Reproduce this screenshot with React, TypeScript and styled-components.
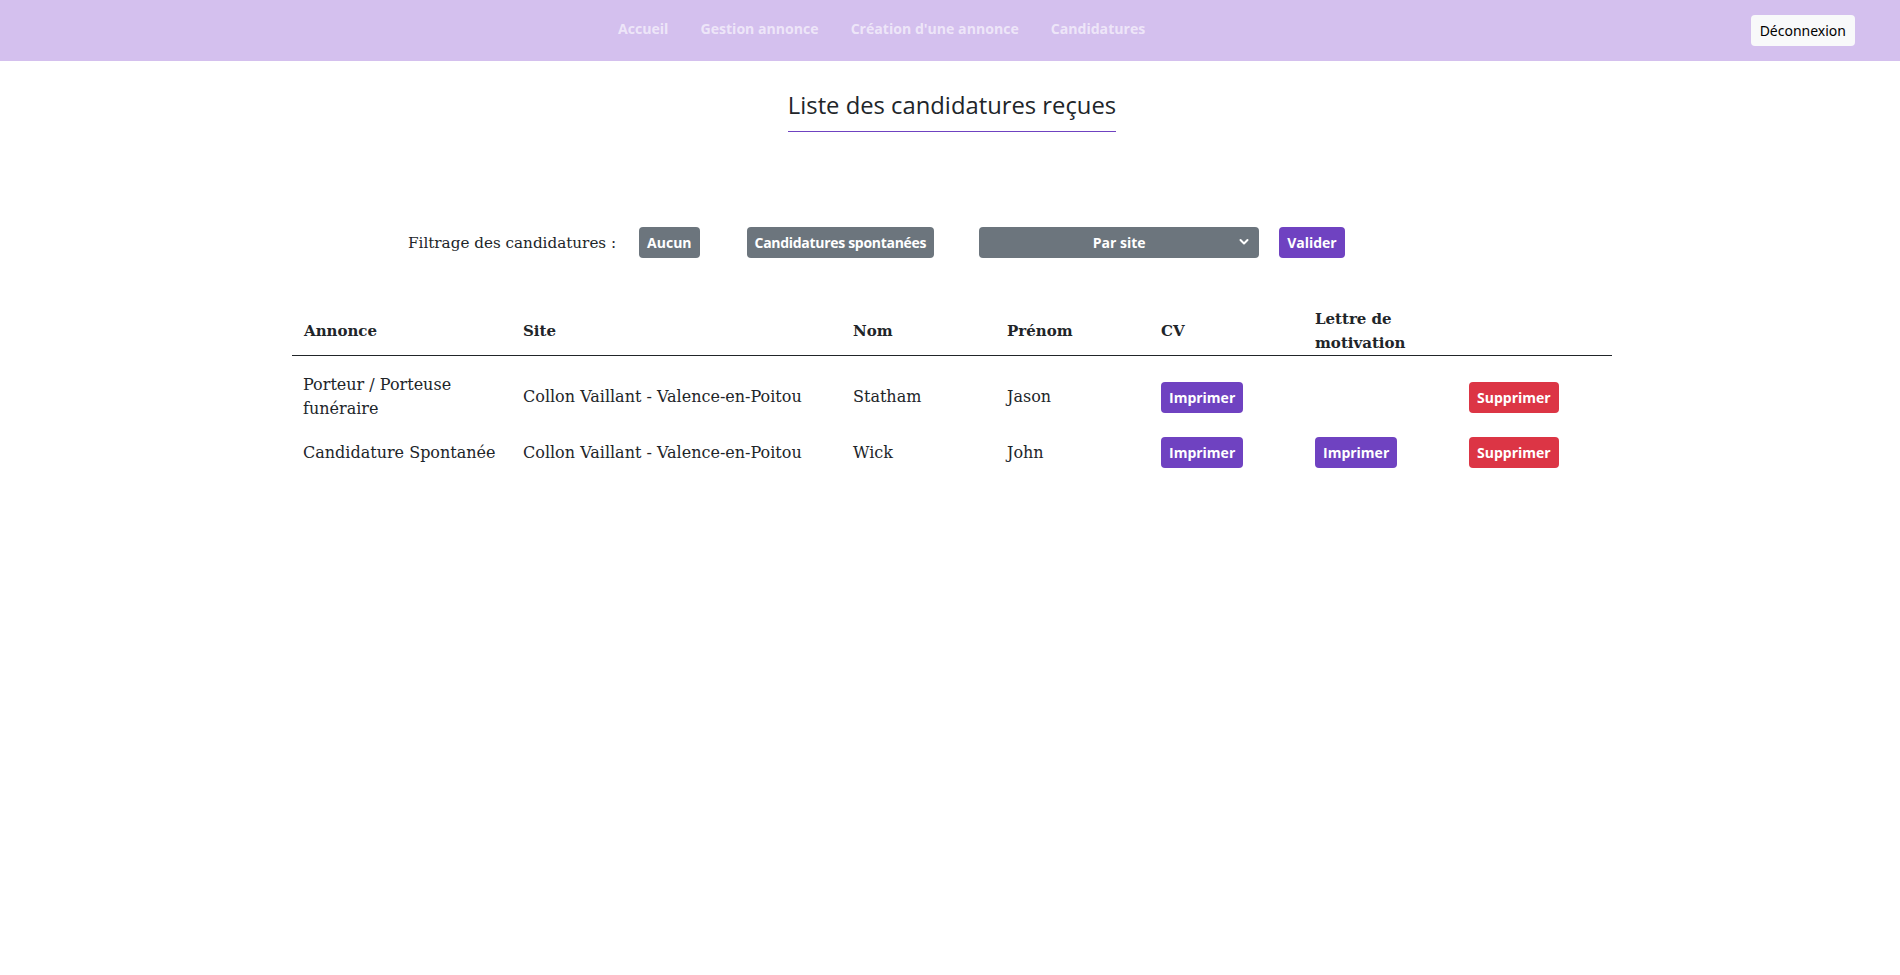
import React from "react";
import styled, { createGlobalStyle } from "styled-components";

const GlobalStyle = createGlobalStyle`
  body {
    margin: 0;
    background: #fff;
    color: #212529;
    font-family: "DejaVu Serif", serif;
  }
  * { box-sizing: border-box; }
`;

const NavBar = styled.nav`
  height: 61px;
  background: #d4c0ee;
  display: flex;
  align-items: center;
  padding: 0 45px 0 602px;
`;

const NavLinks = styled.div`
  display: flex;
  flex: 1;
  margin-bottom: 5px;
`;

const NavLink = styled.a`
  padding: 0 16px;
  font-family: "Open Sans", sans-serif;
  font-weight: 700;
  font-size: 14.1px;
  color: rgba(255, 255, 255, 0.62);
  text-decoration: none;
  cursor: pointer;
`;

const LogoutButton = styled.button`
  height: 31px;
  padding: 0 9px;
  border: none;
  border-radius: 4px;
  background: #f8f9fa;
  color: #000;
  font-family: "Noto Sans", sans-serif;
  font-size: 14px;
  cursor: pointer;
`;

const Main = styled.main`
  width: 1320px;
  margin-left: 292px;
  display: flex;
  flex-direction: column;
`;

const TitleWrap = styled.div`
  display: flex;
  justify-content: center;
  margin-top: 29px;
`;

const Title = styled.h2`
  margin: 0;
  padding-bottom: 10px;
  border-bottom: 1px solid #6f42c1;
  font-family: "Open Sans", sans-serif;
  font-weight: 400;
  font-size: 23.8px;
  line-height: 31px;
  color: #212529;
`;

const FilterRow = styled.div`
  display: flex;
  align-items: center;
  margin-top: 95px;
  padding-left: 116px;
  height: 31px;
`;

const FilterLabel = styled.span`
  font-size: 15.2px;
  margin-right: 23px;
`;

const Button = styled.button<{ variant: "gray" | "purple" | "red"; gap?: number }>`
  height: 31px;
  padding: 0 8px;
  border: none;
  border-radius: 4px;
  margin-right: ${(p) => p.gap ?? 0}px;
  background: ${(p) =>
    p.variant === "gray" ? "#6c757d" : p.variant === "purple" ? "#6f42c1" : "#dc3545"};
  color: #fff;
  font-family: "Open Sans", sans-serif;
  font-weight: 700;
  font-size: 14px;
  cursor: pointer;
`;

const SpontButton = styled(Button)`
  letter-spacing: -0.3px;
`;

const SelectWrap = styled.div`
  position: relative;
  width: 280px;
  height: 31px;
  margin-right: 20px;
`;

const Select = styled.select`
  width: 100%;
  height: 100%;
  appearance: none;
  border: none;
  border-radius: 4px;
  background: #6c757d;
  color: #fff;
  font-family: "Open Sans", sans-serif;
  font-weight: 700;
  font-size: 14px;
  text-align: center;
  text-align-last: center;
  padding: 0 24px;
`;

const Chevron = styled.svg`
  position: absolute;
  right: 10px;
  top: 11px;
  pointer-events: none;
`;

const Table = styled.table`
  margin-top: 41px;
  width: 1320px;
  border-collapse: collapse;
  table-layout: fixed;
`;

const Th = styled.th<{ w?: number }>`
  width: ${(p) => (p.w ? `${p.w}px` : "auto")};
  padding: 8px 8px 0;
  text-align: left;
  vertical-align: middle;
  font-size: 15px;
  font-weight: 700;
  line-height: 24px;
  border-bottom: 1px solid #212529;

  &:first-child {
    padding-left: 12px;
  }
`;

const Tr = styled.tr`
  &:first-child td {
    padding-top: 17px;
  }
`;

const Td = styled.td`
  padding: 8px;
  vertical-align: middle;
  font-size: 16px;
  line-height: 24px;

  &:first-child {
    padding-left: 11px;
  }
`;

const rows = [
  {
    annonce: "Porteur / Porteuse funéraire",
    site: "Collon Vaillant - Valence-en-Poitou",
    nom: "Statham",
    prenom: "Jason",
    lettre: false,
  },
  {
    annonce: "Candidature Spontanée",
    site: "Collon Vaillant - Valence-en-Poitou",
    nom: "Wick",
    prenom: "John",
    lettre: true,
  },
];

export default function App() {
  return (
    <>
      <GlobalStyle />
      <NavBar>
        <NavLinks>
          <NavLink>Accueil</NavLink>
          <NavLink>Gestion annonce</NavLink>
          <NavLink>Création d'une annonce</NavLink>
          <NavLink>Candidatures</NavLink>
        </NavLinks>
        <LogoutButton>Déconnexion</LogoutButton>
      </NavBar>
      <Main>
        <TitleWrap>
          <Title>Liste des candidatures reçues</Title>
        </TitleWrap>
        <FilterRow>
          <FilterLabel>Filtrage des candidatures :</FilterLabel>
          <Button variant="gray" gap={47}>Aucun</Button>
          <SpontButton variant="gray" gap={45}>Candidatures spontanées</SpontButton>
          <SelectWrap>
            <Select defaultValue="site">
              <option value="site">Par site</option>
            </Select>
            <Chevron width="10" height="8" viewBox="0 0 10 8">
              <path d="M1.5 2 L5 5.5 L8.5 2" fill="none" stroke="#fff" strokeWidth="2" strokeLinecap="round" strokeLinejoin="round" />
            </Chevron>
          </SelectWrap>
          <Button variant="purple">Valider</Button>
        </FilterRow>
        <Table>
          <thead>
            <tr>
              <Th w={223}>Annonce</Th>
              <Th w={330}>Site</Th>
              <Th w={154}>Nom</Th>
              <Th w={154}>Prénom</Th>
              <Th w={154}>CV</Th>
              <Th w={154}>Lettre de motivation</Th>
              <Th />
            </tr>
          </thead>
          <tbody>
            {rows.map((r) => (
              <Tr key={r.nom}>
                <Td>{r.annonce}</Td>
                <Td>{r.site}</Td>
                <Td>{r.nom}</Td>
                <Td>{r.prenom}</Td>
                <Td>
                  <Button variant="purple">Imprimer</Button>
                </Td>
                <Td>{r.lettre && <Button variant="purple">Imprimer</Button>}</Td>
                <Td>
                  <Button variant="red">Supprimer</Button>
                </Td>
              </Tr>
            ))}
          </tbody>
        </Table>
      </Main>
    </>
  );
}
